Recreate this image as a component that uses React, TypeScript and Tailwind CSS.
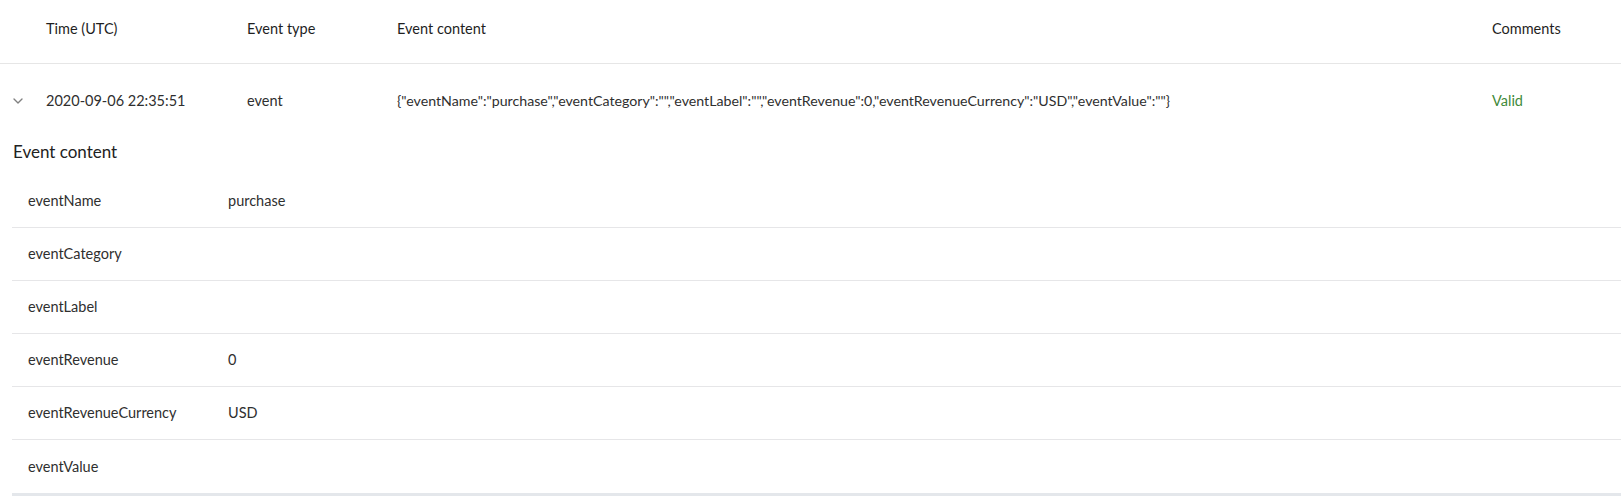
import { ChevronDown } from 'lucide-react';

const payload = {
  eventName: 'purchase',
  eventCategory: '',
  eventLabel: '',
  eventRevenue: 0,
  eventRevenueCurrency: 'USD',
  eventValue: '',
};

export default function App() {
  const fields = Object.entries(payload);

  return (
    <div className="w-full min-h-screen bg-white text-[#2f2f2f] font-['Lato',sans-serif] text-[14.5px]">
      {/* table head */}
      <div className="flex items-center h-[64px] pb-[5px] border-b border-[#e6e6e6] text-[#1f1f1f]">
        <div className="w-[46px] shrink-0" />
        <div className="w-[201px] shrink-0">Time (UTC)</div>
        <div className="w-[150px] shrink-0">Event type</div>
        <div className="flex-1">Event content</div>
        <div className="w-[129px] shrink-0">Comments</div>
      </div>

      {/* event row */}
      <div className="flex items-center h-[74px]">
        <div className="w-[46px] shrink-0 flex justify-center pr-[10px]">
          <ChevronDown className="w-[16px] h-[16px] text-[#808080]" strokeWidth={2} />
        </div>
        <div className="w-[201px] shrink-0">2020-09-06 22:35:51</div>
        <div className="w-[150px] shrink-0">event</div>
        <div className="flex-1 whitespace-nowrap text-[14.2px]">{JSON.stringify(payload)}</div>
        <div className="w-[129px] shrink-0 text-[#3f8a3a]">Valid</div>
      </div>

      {/* expanded details */}
      <div className="h-[37px] pt-[2px] pl-[13px] text-[17px] leading-6 text-[#222]">Event content</div>
      <div className="ml-[12px] border-b-[3px] border-[#e4e7eb]">
        {fields.map(([key, value], idx) => (
          <div
            key={key}
            className={`flex items-center h-[53px] pl-[16px] ${idx < fields.length - 1 ? 'border-b border-[#e6e6e8]' : ''}`}
          >
            <div className="w-[200px] shrink-0">{key}</div>
            <div>{String(value)}</div>
          </div>
        ))}
      </div>
      <div className="h-[4px] bg-[#f4f5f7]" />
    </div>
  );
}
